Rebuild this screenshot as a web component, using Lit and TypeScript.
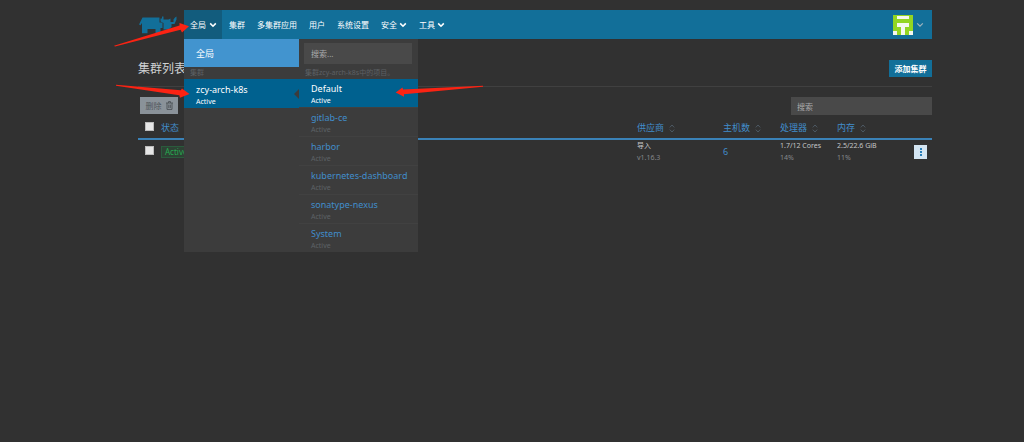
import { LitElement, html, css, svg } from "lit";
import { customElement, state } from "lit/decorators.js";

const NAV = [
  { label: "集群", menu: false },
  { label: "多集群应用", menu: false },
  { label: "用户", menu: false },
  { label: "系统设置", menu: false },
  { label: "安全", menu: true },
  { label: "工具", menu: true },
];
const PROJECTS = ["Default", "gitlab-ce", "harbor", "kubernetes-dashboard", "sonatype-nexus", "System"];
const COLUMNS = [
  { label: "供应商", cls: "vendor" },
  { label: "主机数", cls: "hosts" },
  { label: "处理器", cls: "cpu" },
  { label: "内存", cls: "memory" },
];

const chevron = html`<svg class="chevron" viewBox="0 0 8 6" aria-hidden="true"><path d="M1.2 1.4 4 4.2 6.8 1.4" /></svg>`;
const sorter = html`<svg class="sorter" viewBox="0 0 6 9" aria-hidden="true"><path d="M.8 3.4 3 1 5.2 3.4M.8 5.6 3 8 5.2 5.6" /></svg>`;

@customElement("app-root")
export class AppRoot extends LitElement {
  @state() private project = "Default";

  static styles = css`
    :host {
      display: block;
      position: relative;
      min-height: 100vh;
      box-sizing: border-box;
      padding: 10px 92px 0 138px;
      background: #313131;
      color: #c4c6c8;
      font: 8px/12px "Noto Sans", "Noto Sans CJK SC", sans-serif;
    }
    * { box-sizing: border-box; }
    button, input { font: inherit; color: inherit; border: 0; margin: 0; padding: 0; border-radius: 0; }
    button { white-space: nowrap; }
    a { color: inherit; text-decoration: none; }
    svg { display: block; fill: none; }
    .top { display: flex; height: 29px; }
    .logo { width: 46px; padding-top: 6px; }
    .logo svg { width: 40px; height: 18px; fill: #126f99; }
    .bar { flex: 1; display: flex; align-items: stretch; background: #126f99; color: #fff; position: relative; }
    .scope { width: 38px; padding: 0 6px; background: #125c7d; display: flex; align-items: center; gap: 3px; color: #fff; }
    .links { display: flex; align-items: center; gap: 12px; padding-left: 7px; flex: 1; }
    .link { display: flex; align-items: center; gap: 2px; white-space: nowrap; }
    .chevron { width: 8px; height: 6px; stroke: currentColor; stroke-width: 1.6; flex: none; }
    .user { display: flex; align-items: center; gap: 3px; padding-right: 8px; background: none; color: #9fb4be; }
    .user .chevron { stroke-width: 1.2; }
    .avatar { width: 20px; height: 20px; }
    .menu { position: absolute; z-index: 2; top: 29px; left: 0; width: 234px; display: flex; background: #3c3c3c; }
    .col { width: 115px; }
    .col.projects { width: 119px; }
    .item { display: block; width: 100%; height: 29px; padding: 2px 12px 0; text-align: left; background: none; color: #418dcb; font-size: 9px; line-height: 13px; border-bottom: 1px solid #414141; }
    .item:last-child { height: 28px; border-bottom: 0; }
    .item small { display: block; font-size: 7px; line-height: 11px; color: #5d6266; }
    .item.on { height: 29px; background: #00618f; color: #fff; position: relative; }
    .item.on small { color: #fff; }
    .item.all { height: 28px; padding-top: 0; background: #4294cf; color: #fff; border: 0; }
    .notch { position: absolute; right: 0; top: 10px; width: 5px; height: 10px; background: #3c3c3c; clip-path: polygon(100% 0, 0 50%, 100% 100%); }
    .caption { height: 12px; padding-left: 6px; font-size: 7px; line-height: 11px; color: #5d6064; white-space: nowrap; }
    .field { background: #494949; color: #c4c6c8; outline: 0; }
    .field::placeholder { color: #a9abad; opacity: 1; }
    .find { padding: 4px 6px 3px 5px; height: 28px; }
    .find .field { display: block; width: 100%; height: 21px; padding: 0 7px; }
    .heading { display: flex; align-items: center; justify-content: space-between; height: 48px; padding-top: 12px; border-bottom: 1px solid #404040; }
    h1 { margin: 0; font-size: 12px; font-weight: 400; line-height: 18px; color: #cfd1d3; }
    .add { width: 43px; height: 17px; background: #126f99; color: #fff; font-weight: 700; }
    .tools { display: flex; justify-content: space-between; padding: 10px 0 0 2px; }
    .delete { display: flex; align-items: center; justify-content: center; gap: 4px; width: 38px; height: 17px; background: #8a9299; color: #50565b; }
    .bin { width: 7px; height: 9px; stroke: currentColor; stroke-width: 1; }
    .tools .field { width: 141px; height: 18px; padding: 0 6px; }
    table { width: 100%; border-collapse: collapse; table-layout: fixed; margin-top: 2px; }
    th, td { padding: 0; text-align: left; vertical-align: top; }
    th { height: 22px; border-bottom: 2px solid #3a82b8; color: #418dcb; font-size: 9px; font-weight: 400; line-height: 12px; padding-top: 5px; }
    .check { width: 23px; }
    .vendor { width: 86px; }
    .hosts, .cpu { width: 57px; }
    .memory { width: 77px; }
    .action { width: 18px; }
    .tick { appearance: none; display: block; width: 9px; height: 9px; margin-left: 7px; background: #e6e6e6; border: 1px solid #bcbcbc; }
    td .tick { margin-top: 6px; }
    .sort { display: flex; align-items: center; gap: 5px; background: none; }
    .sorter { width: 6px; height: 9px; stroke: #4d5963; stroke-width: 1; }
    td { font-size: 7px; line-height: 12px; }
    td span { display: block; color: #85888b; }
    .badge { width: 31px; height: 12px; margin-top: 6px; padding-left: 3px; border: 1px solid #2b5b3d; background: #2d4234; color: #27aa51; font-size: 8px; line-height: 10px; }
    .count { font-size: 9px; line-height: 24px; color: #418dcb; }
    .more { display: block; width: 13px; height: 14px; margin-top: 5px; background: #d3e5f2; }
    .more svg { width: 13px; height: 14px; fill: #287fb9; }
    .marks { position: absolute; z-index: 3; top: 0; left: 0; width: 500px; height: 110px; fill: #fb2313; pointer-events: none; }
  `;

  private get rancherLogo() {
    return svg`<path d="M4.500 1.500H21.500V6.500H24.500V12H22.500V17.300H17.500V13H9.500V17.300H4V7L2.500 9.300 1 8.500Z"/><path d="M24 2.500V.5H25.500V3.500H30.500L32.500 2.500V6H35.500V3.500L37 1.500 38.500 .5V3.500L36.500 8H33.500V11L30.500 13.500H25.500V7L22.500 5.500V2.500Z"/>`;
  }

  render() {
    return html`
      <header class="top">
        <a class="logo" href="#" aria-label="Rancher"><svg viewBox="0 0 40 18">${this.rancherLogo}</svg></a>
        <nav class="bar">
          <button class="scope" aria-expanded="true">全局${chevron}</button>
          <div class="links">
            ${NAV.map((n) => html`<a class="link" href="#">${n.label}${n.menu ? chevron : ""}</a>`)}
          </div>
          <button class="user" aria-label="User">
            <svg class="avatar" viewBox="0 0 20 20"><path fill="#92d522" d="M0 0h20v20H0z" /><path fill="#f4f8ee" d="M4 1h12v3H4zM4 8h12v4h-4v8H8v-8H4zM0 16h4v4H0zM16 16h4v4h-4z" /></svg>
            ${chevron}
          </button>
          <div class="menu">
            <div class="col">
              <button class="item all">全局</button>
              <div class="caption">集群</div>
              <button class="item on">zcy-arch-k8s<small>Active</small><i class="notch"></i></button>
            </div>
            <div class="col projects">
              <div class="find"><input class="field" aria-label="搜索" placeholder="搜索..." /></div>
              <div class="caption">集群zcy-arch-k8s中的项目。</div>
              ${PROJECTS.map((p) => html`<button class="item ${p === this.project ? "on" : ""}" @click=${() => (this.project = p)}>${p}<small>Active</small></button>`)}
            </div>
          </div>
        </nav>
      </header>
      <main>
        <div class="heading"><h1>集群列表</h1><button class="add">添加集群</button></div>
        <div class="tools">
          <button class="delete">删除<svg class="bin" viewBox="0 0 7 9"><path d="M0 2h7M2.5 2V.6h2V2M1 2v6.4h5V2M2.8 3.6v3.4M4.3 3.6v3.4" /></svg></button>
          <input class="field" aria-label="搜索" placeholder="搜索" />
        </div>
        <table>
          <thead>
            <tr>
              <th class="check"><input class="tick" type="checkbox" aria-label="全选" /></th>
              <th>状态</th>
              ${COLUMNS.map((c) => html`<th class=${c.cls}><button class="sort">${c.label}${sorter}</button></th>`)}
              <th class="action"></th>
            </tr>
          </thead>
          <tbody>
            <tr>
              <td><input class="tick" type="checkbox" aria-label="zcy-arch-k8s" /></td>
              <td><div class="badge">Active</div></td>
              <td>导入<span>v1.16.3</span></td>
              <td class="count">6</td>
              <td>1.7/12 Cores<span>14%</span></td>
              <td>2.5/22.6 GiB<span>11%</span></td>
              <td><button class="more" aria-label="More"><svg viewBox="0 0 13 14"><path d="M6 3h2v2H6zM6 6h2v2H6zM6 9h2v2H6z" /></svg></button></td>
            </tr>
          </tbody>
        </table>
      </main>
      <svg class="marks" viewBox="0 0 500 110" aria-hidden="true">
        <path d="M114 45.800 179.500 25.500 179.500 23 189 26.300 182 32.500 180.500 29.800 115 46.600Z" />
        <path d="M116 84.800 180.700 90.300 182 88.500 189.500 94 180 97.800 179.300 95.300 116 85.700Z" />
        <path d="M483 85.800 403 89.500 402.500 87.500 395.700 92.500 404 96.700 404 94.300 483 86.700Z" />
      </svg>
    `;
  }
}
